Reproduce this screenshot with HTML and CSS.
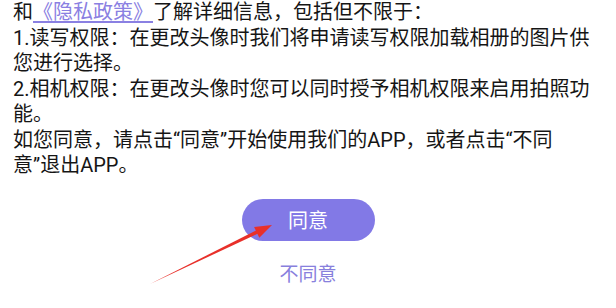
FILE: index.html
```html
<!DOCTYPE html>
<html lang="zh-CN">
<head>
    <meta charset="UTF-8">
    <meta name="viewport" content="width=device-width, initial-scale=1.0">
    <title>隐私政策</title>
    <link rel="stylesheet" href="styles.css">
</head>
<body>
    <div class="dialog">
        <p class="content">
            和<a href="#" class="link">《隐私政策》</a>了解详细信息，包括但不限于：<br>
            1.读写权限：在更改头像时我们将申请读写权限加载相册的图片供您进行选择。<br>
            2.相机权限：在更改头像时您可以同时授予相机权限来启用拍照功能。<br>
            如您同意，请点击“同意”开始使用我们的APP，或者点击“不同<span class="nobr">意”退出</span>APP。
        </p>

        <div class="actions">
            <button class="btn-agree">同意</button>
            <button class="btn-refuse">不同意</button>
        </div>

        <!-- annotation arrow -->
        <svg class="arrow" width="616" height="308" viewBox="0 0 616 308">
            <polygon points="150,284 259.6,232.8 258.1,229.4" fill="#e8302a"/>
            <polygon points="272,225 259.3,237.8 254.1,227" fill="#e8302a"/>
        </svg>
    </div>
</body>
</html>
```

FILE: styles.css
```css
body {
    margin: 0;
    background: #fff;
    font-family: Roboto, "Noto Sans CJK SC", sans-serif;
}
.dialog {
    position: relative;
    width: 616px;
    height: 308px;
    overflow: hidden;
}
.content {
    margin: 0;
    padding: 0 13px;
    font-size: 20px;
    line-height: 25.5px;
    color: #151515;
}
.nobr {
    white-space: nowrap;
}
.link {
    color: #8a80e2;
    text-decoration: underline;
    text-underline-offset: 2px;
}
.actions {
    display: flex;
    flex-direction: column;
    align-items: center;
    margin-top: 20px;
}
.btn-agree {
    width: 133px;
    height: 42px;
    border: none;
    border-radius: 21px;
    background: #8279e6;
    color: #fff;
    font-family: inherit;
    font-size: 20px;
    padding: 0;
}
.btn-refuse {
    margin-top: 21px;
    border: none;
    background: none;
    color: #8880dd;
    font-family: inherit;
    font-size: 19px;
    padding: 0;
    line-height: 26px;
}
.arrow {
    position: absolute;
    left: 0;
    top: 0;
    pointer-events: none;
}
```
